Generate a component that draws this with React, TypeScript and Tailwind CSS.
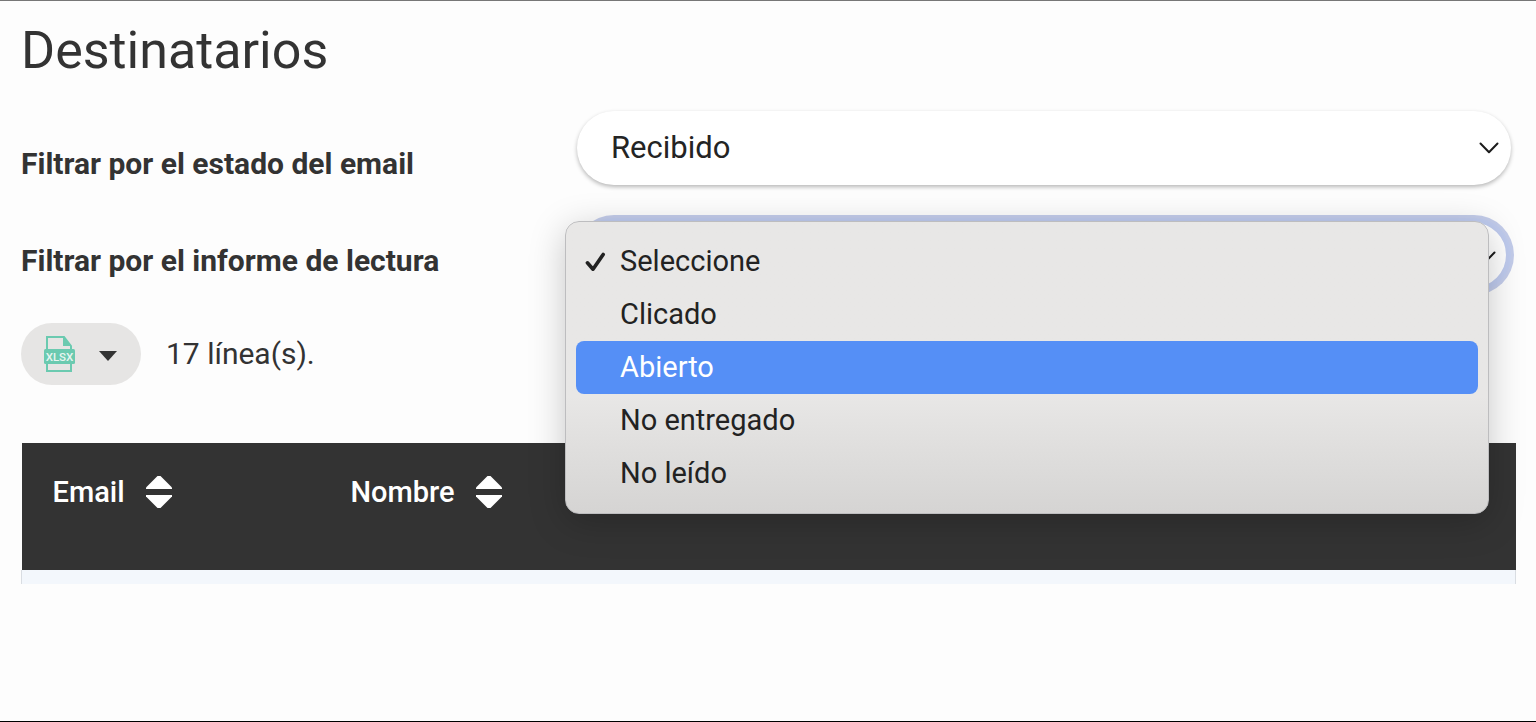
import { useState } from "react";

const readOptions = ["Seleccione", "Clicado", "Abierto", "No entregado", "No leído"];

const columns = ["Email", "Nombre"];

function ChevronIcon({ className }: { className: string }) {
  return (
    <svg
      viewBox="0 0 20 12"
      className={`pointer-events-none absolute h-3 w-5 -translate-y-1/2 ${className}`}
      fill="none"
      stroke="#1c1c1c"
      strokeWidth="2"
      strokeLinecap="round"
      strokeLinejoin="round"
      aria-hidden="true"
    >
      <path d="M1.5 1.5 10 10.2 18.5 1.5" />
    </svg>
  );
}

function CheckIcon() {
  return (
    <svg
      viewBox="0 0 22 22"
      className="h-[22px] w-[22px]"
      fill="none"
      stroke="currentColor"
      strokeWidth="3.6"
      strokeLinecap="round"
      strokeLinejoin="round"
      aria-hidden="true"
    >
      <path d="M2.4 11.8 8 18.2 18.2 3.4" />
    </svg>
  );
}

function XlsxIcon() {
  return (
    <svg viewBox="0 0 32 38" className="h-[38px] w-8" aria-hidden="true">
      <g fill="none" stroke="#6bcab0" strokeWidth="2">
        <path d="M4 15V2h17l7 9v4" />
        <path d="M4 27v9h24v-9" />
      </g>
      <path d="M20 1v10h8z" fill="#6bcab0" />
      <rect x="1" y="14" width="31" height="15" rx="1.5" fill="#6bcab0" />
      <text
        x="16.5"
        y="25.5"
        textAnchor="middle"
        fontSize="11.5"
        fontWeight="500"
        fontFamily="Roboto, sans-serif"
        fill="#e9f5f1"
      >
        XLSX
      </text>
    </svg>
  );
}

function SortIcon() {
  return (
    <svg viewBox="0 0 26 34" className="h-[34px] w-[26px]" fill="#ffffff" aria-hidden="true">
      <path d="M11.5 1h3L26 12.5V14H0v-1.5z" />
      <path d="M0 20h26v1.5L14.5 33h-3L0 21.5z" />
    </svg>
  );
}

export default function App() {
  const [status, setStatus] = useState("Recibido");
  const [report, setReport] = useState("Seleccione");
  const [active, setActive] = useState("Abierto");

  return (
    <main className="min-h-screen border-t border-b border-t-[#777777] border-b-black bg-[#fdfdfd] pl-[21px] pr-5 font-['Roboto',sans-serif] text-[#333333]">
      <h1 className="pt-[18px] text-[52px] leading-[64px]">Destinatarios</h1>

      <div className="mt-7 flex">
        <div className="flex w-[556px] shrink-0 flex-col gap-[57px] pt-[33px] text-[30px] leading-10 font-bold">
          <label htmlFor="status">Filtrar por el estado del email</label>
          <label htmlFor="report">Filtrar por el informe de lectura</label>
        </div>

        <div className="mr-[5px] flex grow flex-col gap-[33px]">
          <div className="relative">
            <select
              id="status"
              value={status}
              onChange={(e) => setStatus(e.target.value)}
              className="h-[74px] w-full appearance-none rounded-full bg-white px-[34px] text-[31px] text-[#242424] shadow-[0_2px_4px_rgba(0,0,0,0.28)] outline-none"
            >
              <option>Recibido</option>
              <option>Enviado</option>
            </select>
            <ChevronIcon className="right-3 top-1/2" />
          </div>

          <div className="relative">
            <select
              id="report"
              value={report}
              onChange={(e) => setReport(e.target.value)}
              className="h-[74px] w-full appearance-none rounded-full border-[5px] border-[#bfcbee] bg-white px-[29px] text-[31px] text-[#242424] ring-3 ring-[#c3ccea] outline-none"
            >
              {readOptions.map((option) => (
                <option key={option}>{option}</option>
              ))}
            </select>
            <ChevronIcon className="right-[15px] top-[39px]" />

            <ul
              role="listbox"
              aria-label="Filtrar por el informe de lectura"
              className="absolute -left-3 right-[22px] top-[3px] z-10 rounded-[14px] border border-[#bdbdbf] bg-linear-to-b from-[#e8e7e6] from-60% to-[#d5d4d3] px-[10px] py-[13px] shadow-[0_8px_36px_rgba(0,0,0,0.22)]"
            >
              {readOptions.map((option) => (
                <li key={option} role="option" aria-selected={option === report}>
                  <button
                    type="button"
                    onMouseEnter={() => setActive(option)}
                    onClick={() => setReport(option)}
                    className={`flex h-[53px] w-full items-center rounded-lg pl-[9px] text-left text-[29px] ${
                      option === active ? "bg-[#558ff6] text-white" : "text-[#222222]"
                    }`}
                  >
                    <span className="w-[35px]">{option === report && <CheckIcon />}</span>
                    {option}
                  </button>
                </li>
              ))}
            </ul>
          </div>
        </div>
      </div>

      <div className="mt-[31px] flex items-center gap-[25px]">
        <button
          type="button"
          aria-label="Exportar XLSX"
          className="flex h-[62px] w-[120px] items-center justify-between rounded-full bg-[#e6e5e4] pl-[22px] pr-6"
        >
          <XlsxIcon />
          <svg viewBox="0 0 18 14" className="h-[14px] w-[18px]" fill="#333333" aria-hidden="true">
            <path d="M0 4h18L9 14z" />
          </svg>
        </button>
        <p className="text-[30px] leading-10">17 línea(s).</p>
      </div>

      <table className="mt-[58px] w-full table-fixed">
        <thead className="bg-[#333333] text-white">
          <tr className="h-[127px] align-top">
            {columns.map((name) => (
              <th key={name} scope="col" className="w-[298px] pl-[31px] pt-[31px] text-left font-medium">
                <button type="button" className="flex items-center gap-[21px] text-[29px] leading-9">
                  {name}
                  <SortIcon />
                </button>
              </th>
            ))}
            <th scope="col" aria-label="Más columnas" />
          </tr>
        </thead>
        <tbody>
          <tr className="h-[14px] border-x border-[#d9dde2] bg-[#f3f7fc]">
            <td colSpan={3} />
          </tr>
        </tbody>
      </table>
    </main>
  );
}
